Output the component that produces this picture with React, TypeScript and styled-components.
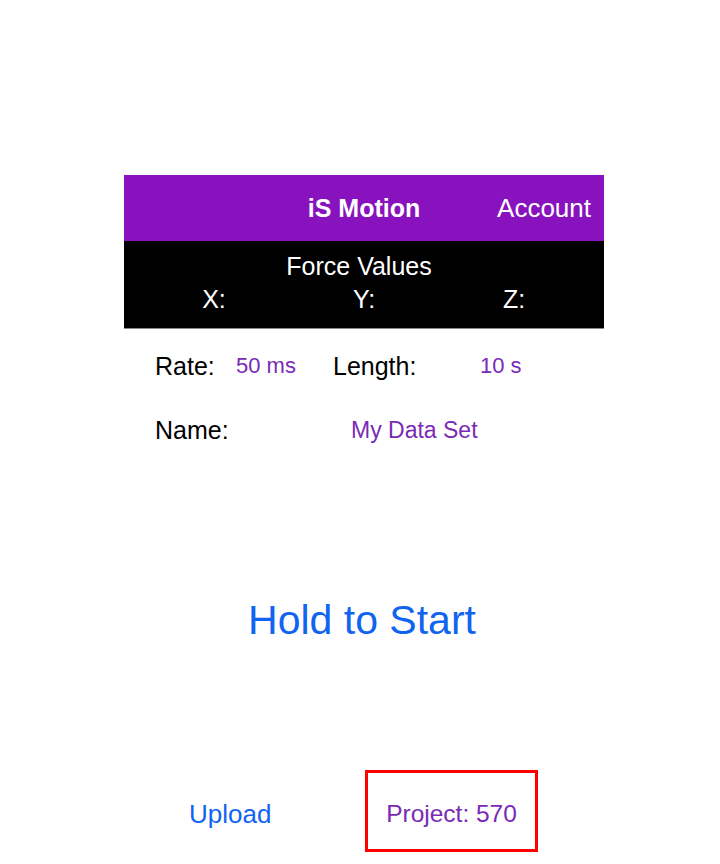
import React from "react";
import styled, { createGlobalStyle } from "styled-components";

const GlobalStyle = createGlobalStyle`
  html, body {
    margin: 0;
    padding: 0;
    background: #ffffff;
    font-family: "Liberation Sans", Arial, Helvetica, sans-serif;
  }
`;

const Page = styled.div`
  width: 720px;
  min-height: 864px;
  padding-top: 175px;
  box-sizing: border-box;
`;

const Panel = styled.div`
  width: 480px;
  margin-left: 124px;
  display: flex;
  flex-direction: column;
`;

const NavBar = styled.div`
  height: 66px;
  background: #8813be;
  display: grid;
  grid-template-columns: 1fr auto 1fr;
  align-items: center;
  color: #ffffff;
`;

const NavTitle = styled.div`
  grid-column: 2;
  font-size: 25px;
  font-weight: 700;
`;

const NavAction = styled.div`
  grid-column: 3;
  justify-self: end;
  padding-right: 13px;
  font-size: 26px;
`;

const ForceBand = styled.div`
  height: 88px;
  background: #000000;
  color: #ffffff;
  border-bottom: 1px solid #8a8a8a;
  display: flex;
  flex-direction: column;
  align-items: center;
  padding-top: 11px;
  box-sizing: border-box;
`;

const ForceTitle = styled.div`
  font-size: 25px;
  line-height: 28px;
  margin-left: -10px;
`;

const AxisRow = styled.div`
  display: grid;
  grid-template-columns: repeat(3, 150px);
  margin-top: 5px;
`;

const Axis = styled.div`
  text-align: center;
  font-size: 25px;
  line-height: 28px;
`;

const Form = styled.div`
  padding-left: 31px;
  padding-top: 3px;
`;

const FieldRow = styled.div<{ $height: number; $cols: string }>`
  height: ${(p) => p.$height}px;
  display: grid;
  grid-template-columns: ${(p) => p.$cols};
  align-items: center;
`;

const Label = styled.div`
  font-size: 25px;
  color: #000000;
`;

const Value = styled.div<{ $size?: number }>`
  font-size: ${(p) => p.$size ?? 22}px;
  color: #7a2ab6;
`;

const HoldButton = styled.button`
  all: unset;
  align-self: center;
  margin-top: 135px;
  margin-left: -4px;
  height: 50px;
  line-height: 50px;
  font-size: 41px;
  color: #1064f0;
  cursor: pointer;
`;

const Footer = styled.div`
  margin-top: 125px;
  display: grid;
  grid-template-columns: 176px 173px;
  padding-left: 65px;
  align-items: center;
`;

const LinkButton = styled.button`
  all: unset;
  font-size: 26px;
  padding-top: 6px;
  color: #1064f0;
  cursor: pointer;
`;

const ProjectBox = styled.div`
  height: 82px;
  border: 3px solid #ff0000;
  box-sizing: border-box;
  display: flex;
  align-items: center;
  justify-content: center;
  padding-top: 5px;
  font-size: 24.5px;
  color: #7a2ab6;
`;

export default function App() {
  return (
    <Page>
      <GlobalStyle />
      <Panel>
        <NavBar>
          <NavTitle>iS Motion</NavTitle>
          <NavAction>Account</NavAction>
        </NavBar>
        <ForceBand>
          <ForceTitle>Force Values</ForceTitle>
          <AxisRow>
            <Axis>X:</Axis>
            <Axis>Y:</Axis>
            <Axis>Z:</Axis>
          </AxisRow>
        </ForceBand>
        <Form>
          <FieldRow $height={68} $cols="81px 97px 147px auto">
            <Label>Rate:</Label>
            <Value>50 ms</Value>
            <Label>Length:</Label>
            <Value>10 s</Value>
          </FieldRow>
          <FieldRow $height={60} $cols="196px auto">
            <Label>Name:</Label>
            <Value $size={23}>My Data Set</Value>
          </FieldRow>
        </Form>
        <HoldButton>Hold to Start</HoldButton>
        <Footer>
          <LinkButton>Upload</LinkButton>
          <ProjectBox>Project: 570</ProjectBox>
        </Footer>
      </Panel>
    </Page>
  );
}
